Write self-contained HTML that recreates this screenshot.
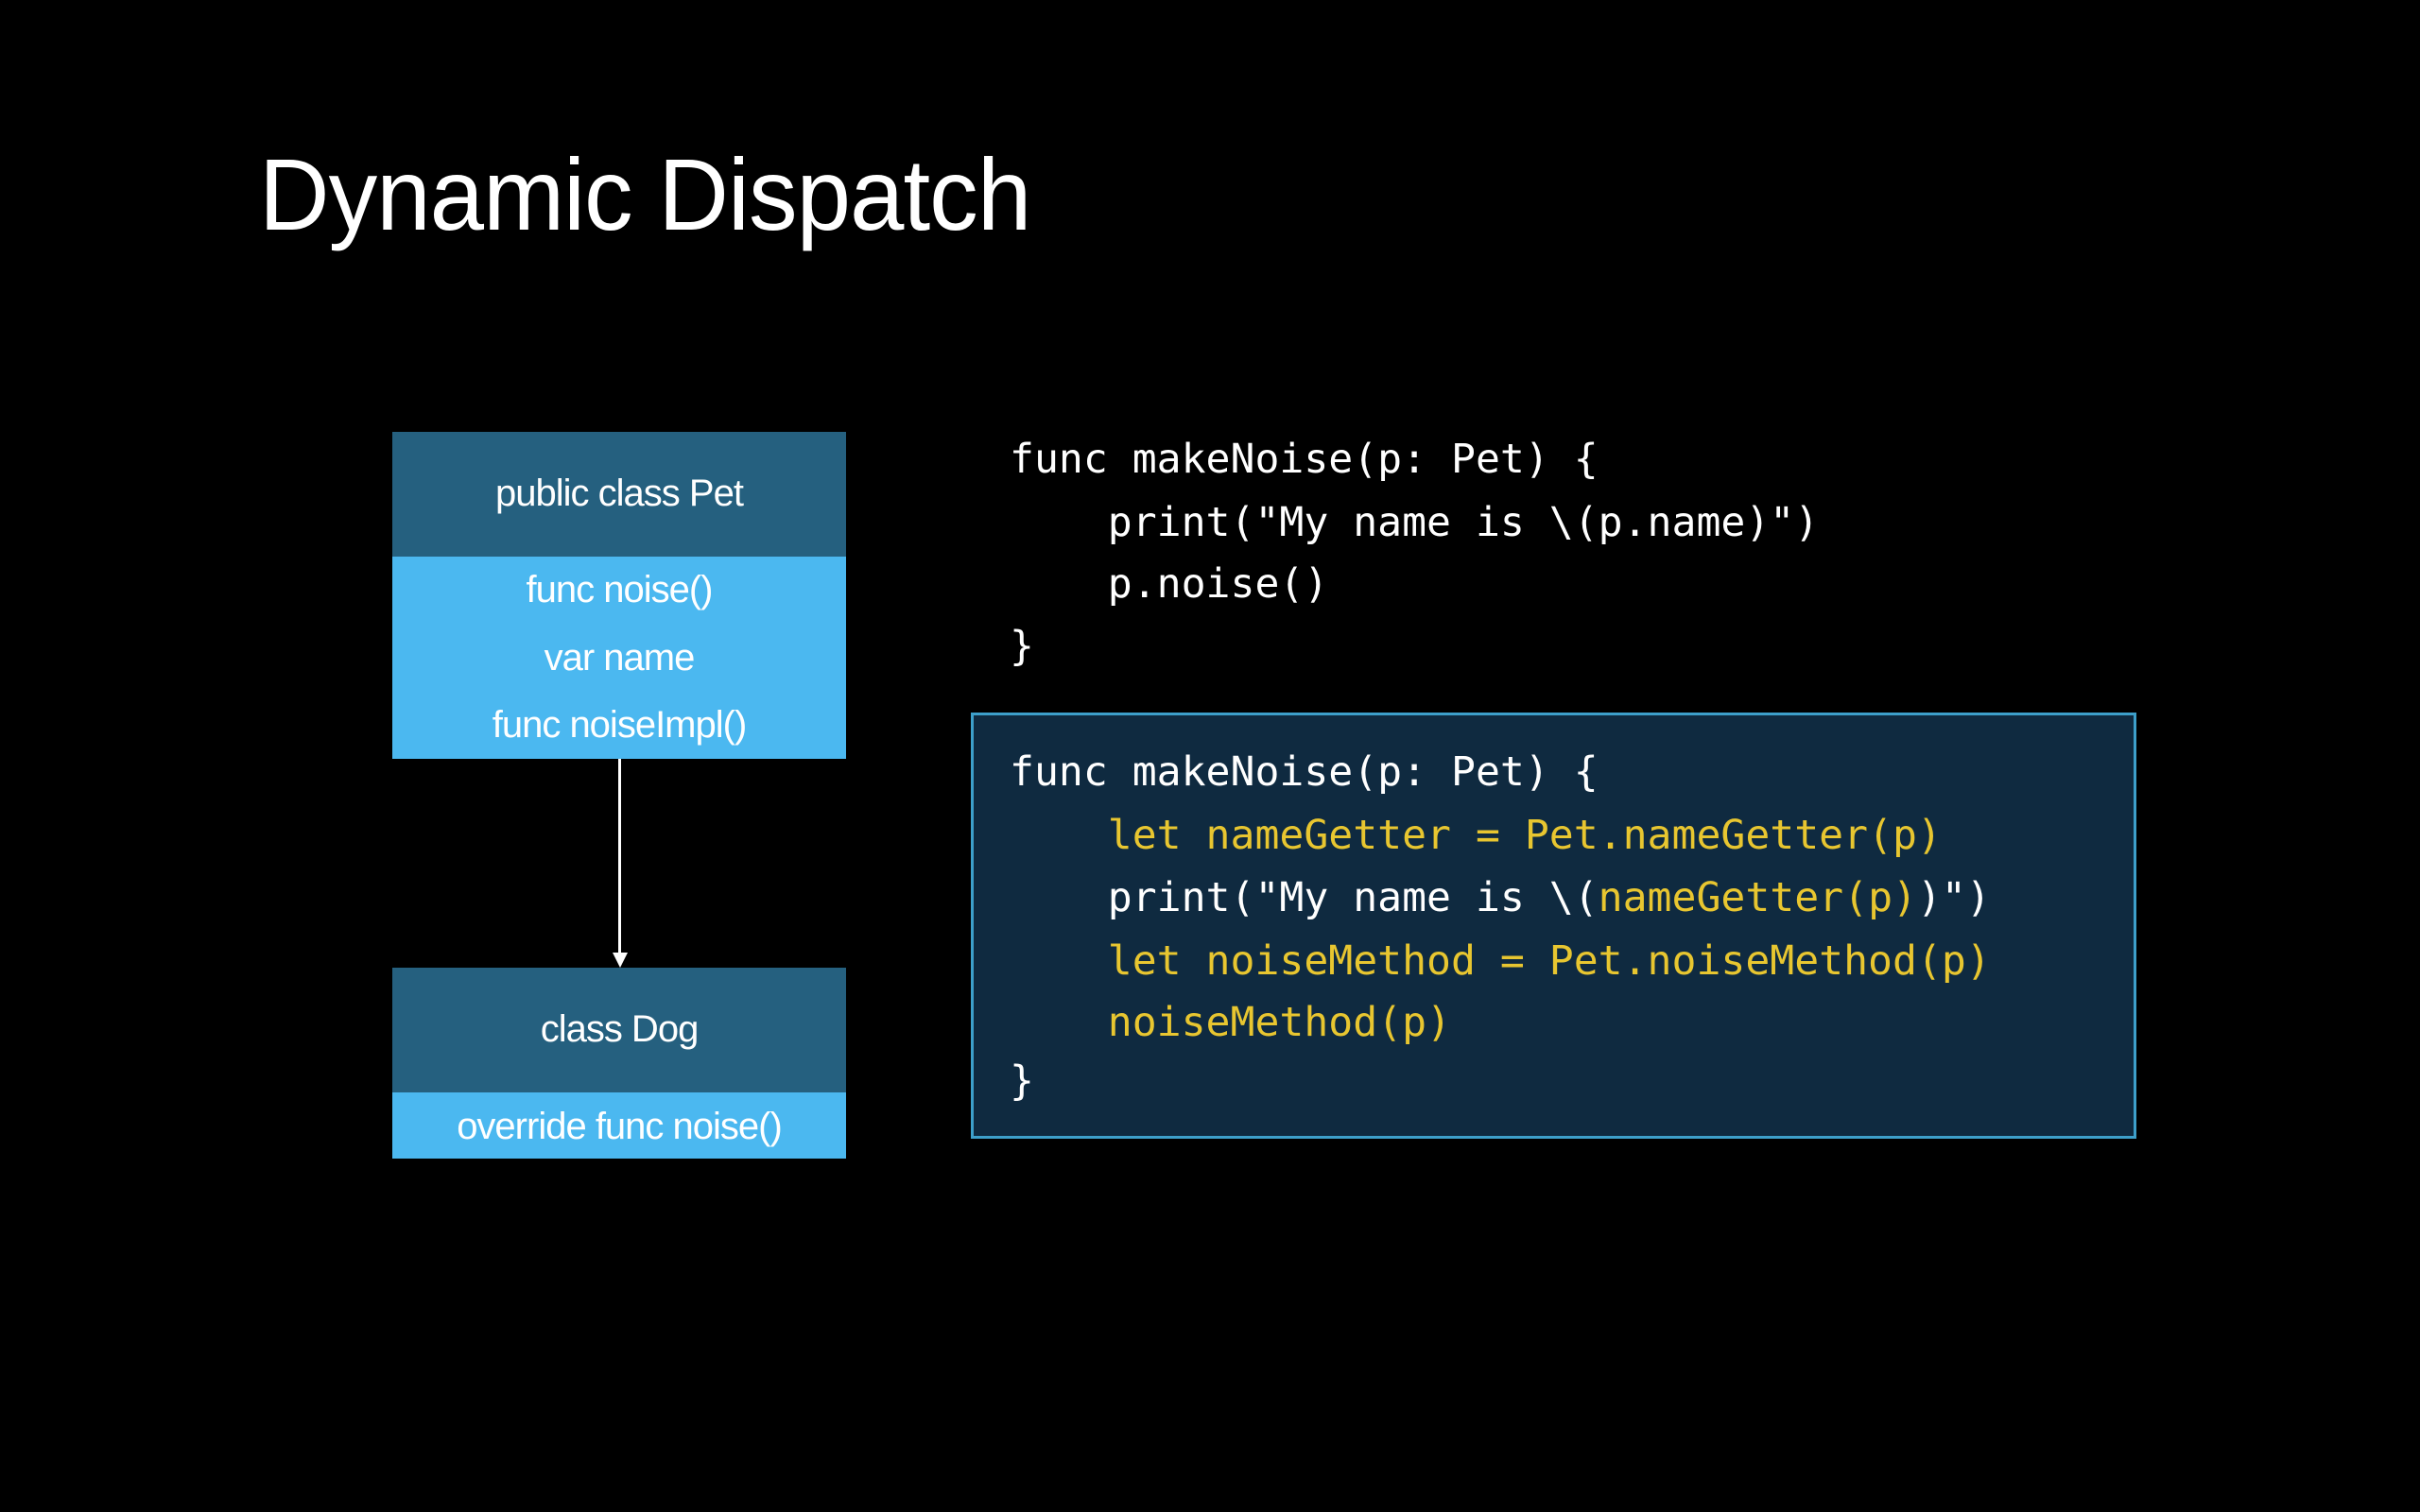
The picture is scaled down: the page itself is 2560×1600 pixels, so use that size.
<!DOCTYPE html>
<html><head><meta charset="utf-8"><style>
html,body{margin:0;padding:0;background:#000;width:2560px;height:1600px;overflow:hidden}
.t{position:absolute;color:#fff;white-space:nowrap}
#title{left:274px;top:152px;font:108px/1 "Liberation Sans",sans-serif;font-weight:normal;transform-origin:0 0;letter-spacing:-1px}
.box{position:absolute;left:415px;width:480px}
.hd{background:#25607f}
.bd{background:#4bb8f0}
.lbl{position:absolute;left:0;width:480px;text-align:center;color:#fff;font:40px/1 "Liberation Sans",sans-serif;letter-spacing:-1px}
.code{position:absolute;left:1068px;font:43.1px/1 "DejaVu Sans Mono","Liberation Mono",monospace;color:#fff;white-space:pre}
.y{color:#e8c630}
</style></head><body>
<div class="t" id="title">Dynamic Dispatch</div>

<div class="box hd" style="top:457px;height:132px"></div>
<div class="box bd" style="top:589px;height:214px"></div>
<div class="box" style="top:0">
<div class="lbl" style="top:502px">public class Pet</div>
<div class="lbl" style="top:604px">func noise()</div>
<div class="lbl" style="top:676px">var name</div>
<div class="lbl" style="top:747px">func noiseImpl()</div>
</div>

<div style="position:absolute;left:654px;top:803px;width:3px;height:207px;background:#fff"></div>
<div style="position:absolute;left:648px;top:1008px;width:0;height:0;border-left:8px solid transparent;border-right:8px solid transparent;border-top:16px solid #fff"></div>

<div class="box hd" style="top:1024px;height:132px"></div>
<div class="box bd" style="top:1156px;height:70px"></div>
<div class="box" style="top:0">
<div class="lbl" style="top:1069px">class Dog</div>
<div class="lbl" style="top:1172px">override func noise()</div>
</div>

<div class="code" style="top:465px">func makeNoise(p: Pet) {</div>
<div class="code" style="top:532px">    print("My name is \(p.name)")</div>
<div class="code" style="top:597px">    p.noise()</div>
<div class="code" style="top:663px">}</div>

<div style="position:absolute;left:1027px;top:754px;width:1227px;height:445px;background:#0f2a40;border:3px solid #3d9fca"></div>
<div class="code" style="top:796px">func makeNoise(p: Pet) {</div>
<div class="code y" style="top:863px">    let nameGetter = Pet.nameGetter(p)</div>
<div class="code" style="top:929px">    print("My name is \(<span class="y">nameGetter(p)</span>)")</div>
<div class="code y" style="top:996px">    let noiseMethod = Pet.noiseMethod(p)</div>
<div class="code y" style="top:1061px">    noiseMethod(p)</div>
<div class="code" style="top:1123px">}</div>
<script>
var t=document.getElementById('title');t.style.transform='scaleX('+(816/t.offsetWidth)+')';
</script>
</body></html>
